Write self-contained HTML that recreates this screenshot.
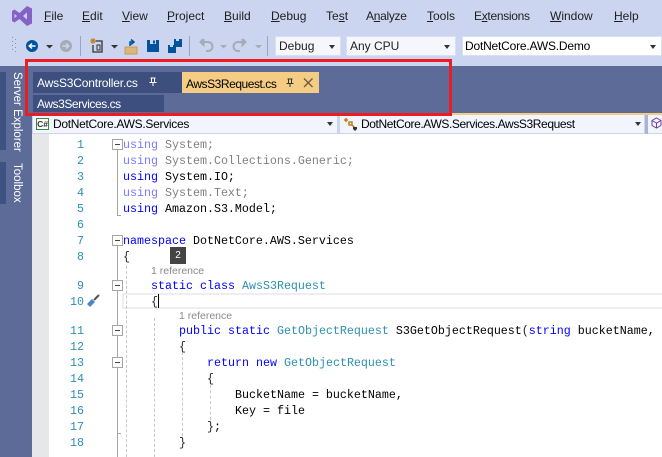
<!DOCTYPE html>
<html><head><meta charset="utf-8">
<style>
html,body{margin:0;padding:0}
body{width:662px;height:457px;overflow:hidden;position:relative;background:#fff;font-family:"Liberation Sans",sans-serif}
.a{position:absolute}
.t{position:absolute;white-space:nowrap;font-size:12px;line-height:16px;color:#1e1e1e}
.t u{text-decoration-thickness:1px;text-underline-offset:1px}
.c{position:absolute;white-space:nowrap;font-family:"Liberation Mono",monospace;font-size:11.67px;line-height:16px;color:#000;white-space:pre;margin-top:1px}
.n{position:absolute;width:14px;text-align:right;left:70px;font-family:"Liberation Mono",monospace;font-size:11.67px;line-height:16px;color:#2b91af;margin-top:1px}
.k{color:#0000ff}.g{color:#7a7aff}.h{color:#808080}.y{color:#2b91af}.o{color:#2a2420}
.b{position:absolute;left:112px;width:9px;height:9px;background:#fff;border:1px solid #a5a5a5;box-sizing:content-box}
.b:after{content:"";position:absolute;left:2px;top:4px;width:5px;height:1px;background:#444}
.ref{position:absolute;font-size:10.5px;line-height:12px;color:#8a8a8a;white-space:nowrap}
.vl{position:absolute;width:1px;background:#a5a5a5}
.dl{position:absolute;width:0;border-left:1px dashed #c8c8c8}
.combo{position:absolute;background:#f5f7fd;border:1px solid #d8e0f5;box-sizing:border-box;height:20px}
.ar{position:absolute;width:0;height:0;border-left:3.5px solid transparent;border-right:3.5px solid transparent;border-top:4px solid #333}
</style></head><body>
<div class="a" style="left:0;top:0;width:662px;height:66px;background:#ccd5f0"></div>
<svg class="a" style="left:11px;top:5px" width="22" height="22" viewBox="0 0 22 22"><path fill="#8661c5" d="M16 1 21 3.500V18.500L16 21 8.500 14 3.500 17.500 1 16V6L3.500 4.500 8.500 8ZM16 7.500 12 11 16 14.500ZM3.500 9V13L6 11Z"/></svg>
<div class="t" style="left:44px;top:8px"><u>F</u>ile</div>
<div class="t" style="left:82px;top:8px"><u>E</u>dit</div>
<div class="t" style="left:122px;top:8px"><u>V</u>iew</div>
<div class="t" style="left:167px;top:8px"><u>P</u>roject</div>
<div class="t" style="left:224px;top:8px"><u>B</u>uild</div>
<div class="t" style="left:271px;top:8px"><u>D</u>ebug</div>
<div class="t" style="left:326px;top:8px">Te<u>s</u>t</div>
<div class="t" style="left:366px;top:8px;letter-spacing:-.3px">A<u>n</u>alyze</div>
<div class="t" style="left:427px;top:8px"><u>T</u>ools</div>
<div class="t" style="left:474px;top:8px;letter-spacing:-.3px">E<u>x</u>tensions</div>
<div class="t" style="left:550px;top:8px"><u>W</u>indow</div>
<div class="t" style="left:614px;top:8px"><u>H</u>elp</div>

<svg class="a" style="left:0;top:30px" width="340" height="28" viewBox="0 0 340 28">
<g fill="#8a94ad"><rect x="12" y="7" width="1" height="1"/><rect x="15" y="9" width="1" height="1"/><rect x="12" y="11" width="1" height="1"/><rect x="15" y="13" width="1" height="1"/><rect x="12" y="15" width="1" height="1"/><rect x="15" y="17" width="1" height="1"/><rect x="12" y="19" width="1" height="1"/><rect x="15" y="21" width="1" height="1"/></g>
<circle cx="32" cy="16" r="6" fill="#00539c"/><path d="M35.500 16H29.500M32 13.500 29.200 16 32 18.500" stroke="#fff" stroke-width="1.500" fill="none"/>
<path d="M46 15h7l-3.500 3.500z" fill="#333"/>
<circle cx="66" cy="16" r="6" fill="#a6abb5"/><path d="M62.500 16H68.500M66 13.500 68.800 16 66 18.500" stroke="#ccd5f0" stroke-width="1.500" fill="none"/>
<rect x="80" y="6" width="1" height="20" fill="#9aa5c4"/>
<path d="M95 11h7v11h-9v-7" fill="none" stroke="#333" stroke-width="1.300"/><path d="M97 15h3v5h-3z" fill="none" stroke="#333"/>
<path d="M93 8v6M90 11h6M91 9l4 4M95 9l-4 4" stroke="#c27d1a" stroke-width="1"/>
<path d="M111 15h7l-3.500 3.500z" fill="#333"/>
<path d="M125 17h12v7h-12z" fill="#dcb67a" stroke="#c69a55"/><path d="M130 16v-4h3M131 9.500 134 12l-3 2.500" fill="none" stroke="#00539c" stroke-width="1.500"/>
<path d="M147 10h12v12h-12z" fill="#00539c"/><rect x="150" y="10" width="6" height="4" fill="#ccd5f0"/><rect x="153" y="10.500" width="2" height="3" fill="#00539c"/>
<path d="M168 15h8v8h-8zM174 9h8v8h-6v-2h-2z" fill="#00539c"/><rect x="170" y="15" width="3" height="2" fill="#ccd5f0"/><rect x="176" y="9" width="3" height="2" fill="#ccd5f0"/>
<rect x="189" y="6" width="1" height="20" fill="#9aa5c4"/>
<path d="M201 12h7a4 4 0 0 1 0 9h-2M203.500 9 200.500 12l3 3V9" fill="none" stroke="#a6abb5" stroke-width="2"/>
<path d="M220 15h7l-3.500 3.500z" fill="#a6abb5"/>
<path d="M245 12h-7a4 4 0 0 0 0 9h2M242.500 9 245.500 12l-3 3V9" fill="none" stroke="#a6abb5" stroke-width="2"/>
<path d="M255 15h7l-3.500 3.500z" fill="#a6abb5"/>
<rect x="267" y="6" width="1" height="20" fill="#9aa5c4"/>
</svg>
<div class="combo" style="left:275px;top:36px;width:66px"></div><div class="t" style="left:279px;top:38px">Debug</div><div class="ar" style="left:329px;top:45px"></div>
<div class="combo" style="left:346px;top:36px;width:110px"></div><div class="t" style="left:350px;top:38px">Any CPU</div><div class="ar" style="left:444px;top:45px"></div>
<div class="combo" style="left:462px;top:36px;width:200px;background:#fff"></div><div class="t" style="left:465px;top:38px;color:#000;letter-spacing:-.2px">DotNetCore.AWS.Demo</div><div class="ar" style="left:650px;top:45px"></div>

<div class="a" style="left:0;top:66px;width:662px;height:391px;background:#5d6b99"></div>
<div class="a" style="left:0;top:72px;width:6px;height:78px;background:#3f5180"></div>
<div class="a" style="left:0;top:162px;width:6px;height:42px;background:#3f5180"></div>
<div class="t" style="left:7px;top:72px;color:#fff;writing-mode:vertical-rl;line-height:20px;font-size:11.5px">Server Explorer</div>
<div class="t" style="left:7px;top:163px;color:#fff;writing-mode:vertical-rl;line-height:20px;font-size:11.5px">Toolbox</div>

<div class="a" style="left:33px;top:72px;width:149px;height:21px;background:#3c4f7e"></div>
<div class="t" style="left:37px;top:75px;color:#fff;letter-spacing:-.17px">AwsS3Controller.cs</div>
<svg class="a" style="left:148px;top:77px" width="10" height="10" viewBox="0 0 10 10"><path d="M2.500 1h5M3.500 1v4.500h3V1M1.500 5.500h7M5 5.500V9" stroke="#fff" fill="none"/></svg>
<div class="a" style="left:182px;top:72px;width:137px;height:21px;background:#f5cc84"></div>
<div class="t" style="left:186px;top:76px;color:#000;letter-spacing:-.45px">AwsS3Request.cs</div>
<svg class="a" style="left:285px;top:78px" width="10" height="10" viewBox="0 0 10 10"><path d="M2.500 1h5M3.500 1v4.500h3V1M1.500 5.500h7M5 5.500V9" stroke="#333" fill="none"/></svg>
<svg class="a" style="left:303px;top:78px" width="11" height="10" viewBox="0 0 11 10"><path d="M1 .5 9.500 9M9.500 .5 1 9" stroke="#6b5a3a" stroke-width="1.300" fill="none"/></svg>
<div class="a" style="left:33px;top:95px;width:131px;height:17px;background:#3c4f7e"></div>
<div class="t" style="left:37px;top:96px;color:#fff;letter-spacing:-.45px">Aws3Services.cs</div>

<div class="a" style="left:32px;top:113px;width:630px;height:2px;background:#f5cc84"></div>
<div class="a" style="left:32px;top:115px;width:630px;height:19px;background:#ccd5f0"></div>
<div class="a" style="left:33px;top:115px;width:304px;height:18px;background:#f2f5fd"></div>
<div class="a" style="left:340px;top:115px;width:304px;height:18px;background:#f2f5fd"></div>
<div class="a" style="left:645px;top:115px;width:3px;height:19px;background:#a9b5d6"></div>
<div class="a" style="left:648px;top:115px;width:14px;height:18px;background:#f2f5fd"></div>
<div class="a" style="left:36px;top:118px;width:13px;height:12px;border:1px solid #388a34;box-sizing:border-box;background:#fff;font:bold 8.500px/10px 'Liberation Sans',sans-serif;color:#333;text-align:center">C#</div>
<div class="t" style="left:53px;top:116px;color:#000;letter-spacing:-.3px">DotNetCore.AWS.Services</div>
<div class="ar" style="left:327px;top:122px"></div>
<svg class="a" style="left:343px;top:117px" width="16" height="15" viewBox="0 0 16 15"><path d="M1 3h4M3 1v4M6 5h3v3H6zM9 8l3 3" stroke="#c27d1a" stroke-width="1.500" fill="none"/><path d="M10 10h4v2l-2 2-2-2z" fill="#333"/></svg>
<div class="t" style="left:361px;top:116px;color:#000;letter-spacing:-.4px">DotNetCore.AWS.Services.AwsS3Request</div>
<div class="ar" style="left:635px;top:122px"></div>
<svg class="a" style="left:651px;top:117px" width="11" height="13" viewBox="0 0 11 13"><path d="M5.500 1 10 3.500v5L5.500 11 1 8.500v-5zM1 3.500 5.500 6 10 3.500M5.500 6v5" fill="none" stroke="#6c3fa8"/></svg>

<div class="a" style="left:32px;top:134px;width:17px;height:323px;background:#e6e7e8"></div>
<div class="a" style="left:49px;top:134px;width:613px;height:323px;background:#fff"></div>

<div class="a" style="left:122px;top:293px;width:540px;height:16px;border:2px solid #eeeef2;border-right:0;box-sizing:border-box"></div>

<div class="n" style="top:136px">1</div><div class="n" style="top:152px">2</div><div class="n" style="top:168px">3</div><div class="n" style="top:184px">4</div><div class="n" style="top:200px">5</div><div class="n" style="top:216px">6</div><div class="n" style="top:232px">7</div><div class="n" style="top:248px">8</div><div class="n" style="top:277px">9</div><div class="n" style="top:293px">10</div><div class="n" style="top:322px">11</div><div class="n" style="top:338px">12</div><div class="n" style="top:354px">13</div><div class="n" style="top:370px">14</div><div class="n" style="top:386px">15</div><div class="n" style="top:402px">16</div><div class="n" style="top:418px">17</div><div class="n" style="top:434px">18</div>

<svg class="a" style="left:85px;top:294px" width="16" height="15" viewBox="0 0 16 15"><path d="M9 6 14 1" stroke="#555" stroke-width="2"/><path d="M2 10 7 5 10 8 5 13z" fill="#4a86c5"/></svg>

<div class="vl" style="left:117px;top:149px;height:66px"></div><div class="a" style="left:117px;top:215px;width:4px;height:1px;background:#a5a5a5"></div>
<div class="vl" style="left:117px;top:245px;height:212px"></div>
<div class="a" style="left:117px;top:433px;width:4px;height:1px;background:#a5a5a5"></div>
<div class="b" style="top:139px"></div><div class="b" style="top:235px"></div><div class="b" style="top:280px"></div><div class="b" style="top:325px"></div><div class="b" style="top:357px"></div>

<div class="dl" style="left:126px;top:266px;height:191px"></div>
<div class="dl" style="left:154px;top:318px;height:139px"></div>
<div class="dl" style="left:182px;top:352px;height:84px"></div>
<div class="dl" style="left:210px;top:385px;height:35px"></div>

<div class="c" style="left:123px;top:136px"><span class="g">using</span><span class="h"> System;</span></div>
<div class="c" style="left:123px;top:152px"><span class="g">using</span><span class="h"> System.Collections.Generic;</span></div>
<div class="c" style="left:123px;top:168px"><span class="k">using</span> System.IO;</div>
<div class="c" style="left:123px;top:184px"><span class="g">using</span><span class="h"> System.Text;</span></div>
<div class="c" style="left:123px;top:200px"><span class="k">using</span> Amazon.S3.Model;</div>
<div class="c" style="left:123px;top:232px"><span class="k">namespace</span> DotNetCore.AWS.Services</div>
<div class="c" style="left:123px;top:248px"><span class="o">{</span></div>
<div class="a" style="left:170px;top:247px;width:16px;height:17px;background:#444;color:#fff;font:10px/17px 'Liberation Sans',sans-serif;text-align:center">2</div>
<div class="ref" style="left:151px;top:265px">1 reference</div>
<div class="c" style="left:151px;top:277px"><span class="k">static</span> <span class="k">class</span> <span class="y">AwsS3Request</span></div>
<div class="c" style="left:151px;top:293px"><span class="o">{</span></div>
<div class="a" style="left:158px;top:294px;width:1px;height:14px;background:#000"></div>
<div class="ref" style="left:179px;top:310px">1 reference</div>
<div class="c" style="left:179px;top:322px"><span class="k">public</span> <span class="k">static</span> <span class="y">GetObjectRequest</span> S3GetObjectRequest<span class="o">(</span><span class="k">string</span> bucketName,</div>
<div class="c" style="left:179px;top:338px"><span class="o">{</span></div>
<div class="c" style="left:207px;top:354px"><span class="k">return</span> <span class="k">new</span> <span class="y">GetObjectRequest</span></div>
<div class="c" style="left:207px;top:370px"><span class="o">{</span></div>
<div class="c" style="left:235px;top:386px">BucketName = bucketName,</div>
<div class="c" style="left:235px;top:402px">Key = file</div>
<div class="c" style="left:207px;top:418px"><span class="o">}</span>;</div>
<div class="c" style="left:179px;top:434px"><span class="o">}</span></div>

<div class="a" style="left:25px;top:59px;width:427px;height:57px;border:3px solid #ed1c24;box-sizing:border-box"></div>
</body></html>
